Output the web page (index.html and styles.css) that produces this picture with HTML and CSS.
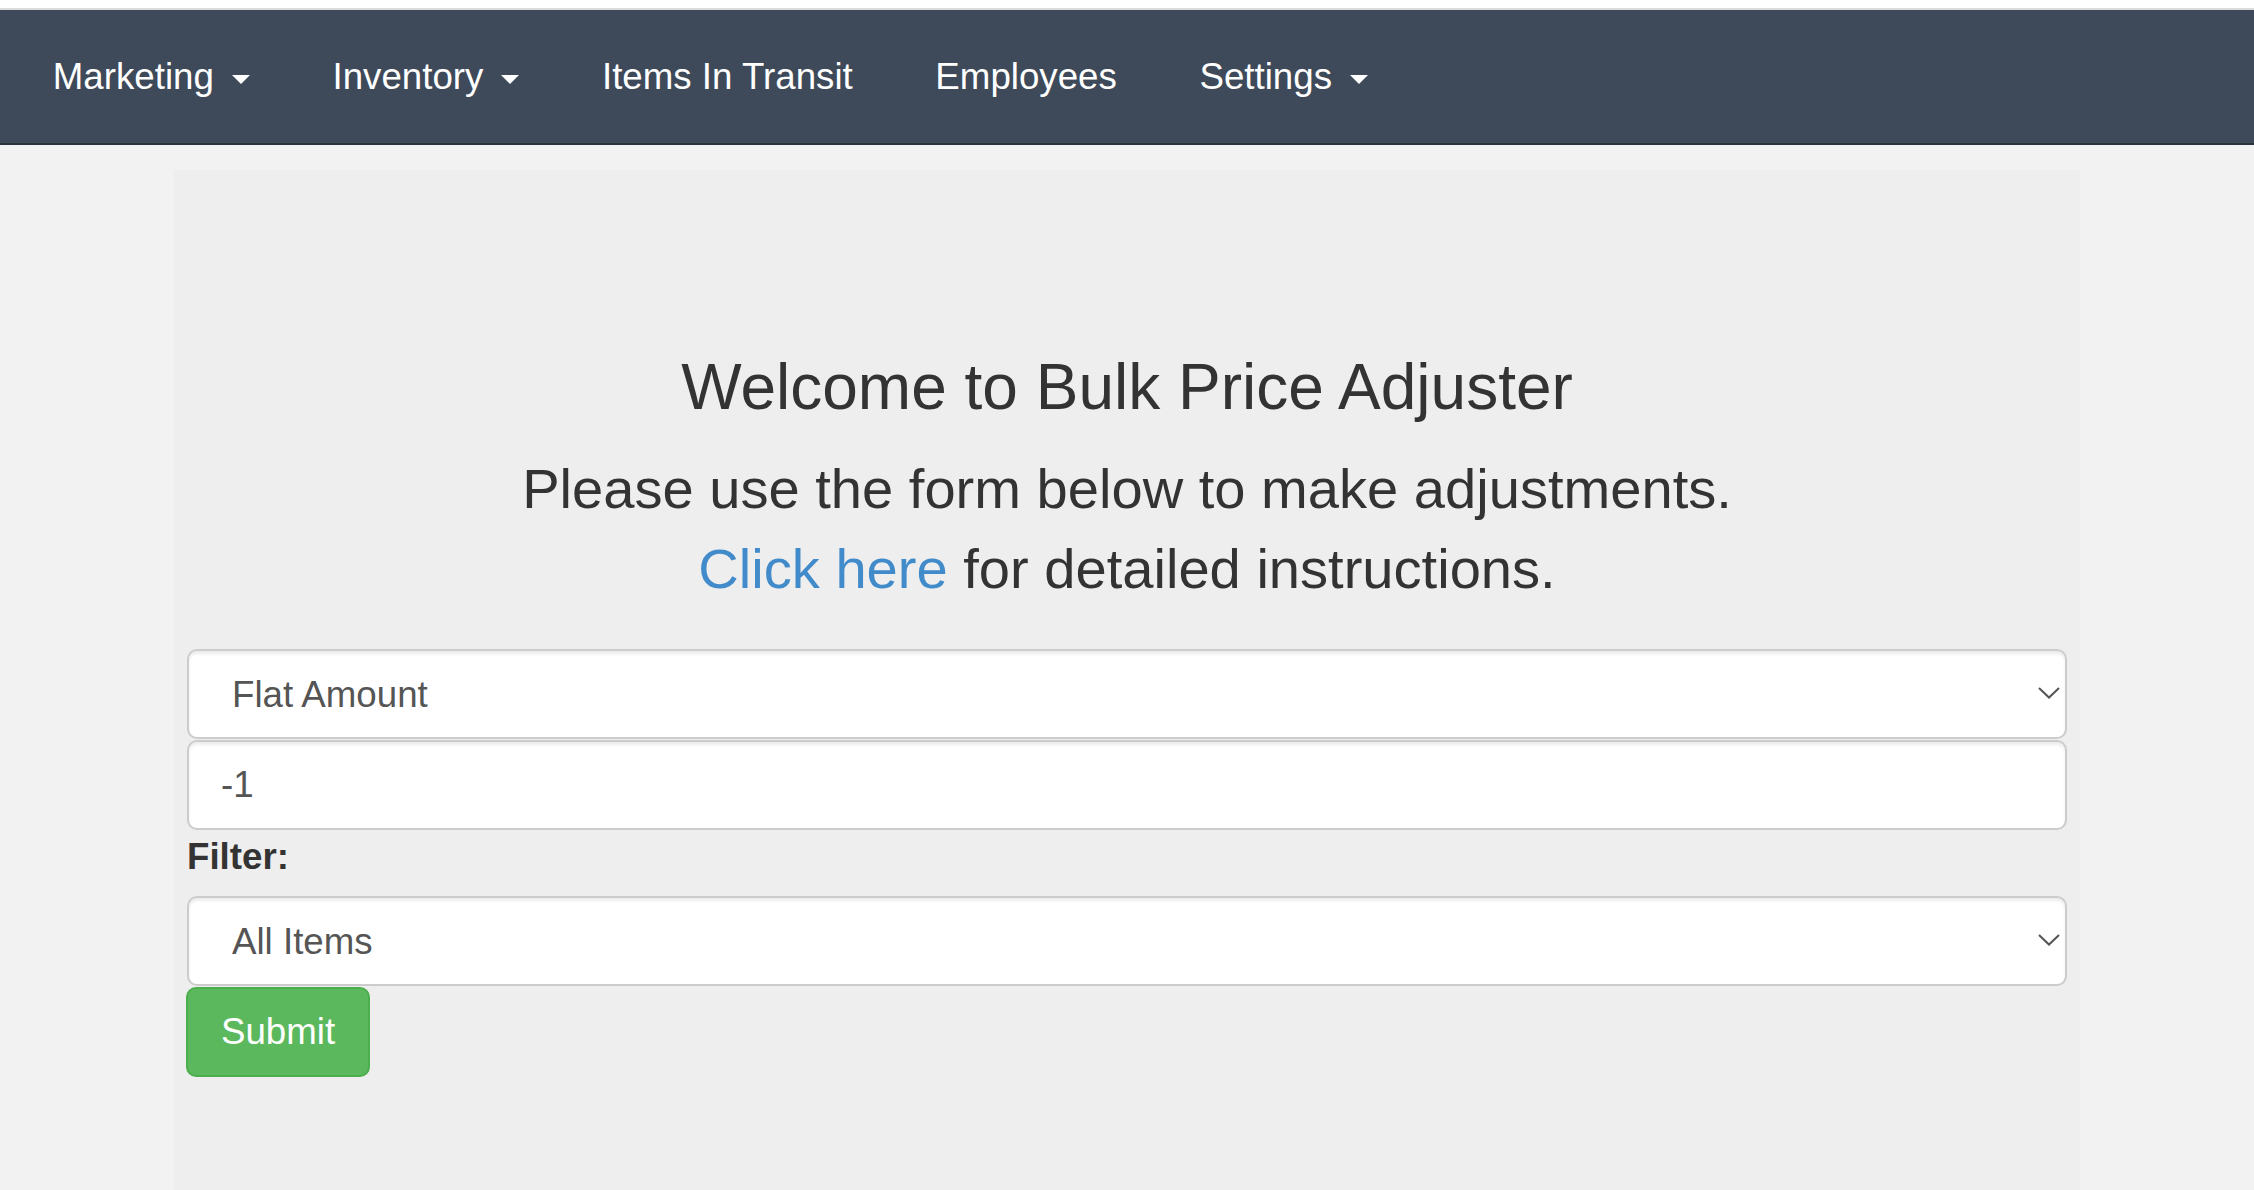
FILE: index.html
```html
<!DOCTYPE html>
<html lang="en">
<head>
<meta charset="utf-8">
<title>Bulk Price Adjuster</title>
<link rel="stylesheet" href="styles.css">
</head>
<body>
<div class="topstrip"></div>
<nav class="navbar">
  <ul class="nav">
    <li><a href="#">Marketing<span class="caret"></span></a></li>
    <li><a href="#">Inventory<span class="caret"></span></a></li>
    <li><a href="#">Items In Transit</a></li>
    <li><a href="#">Employees</a></li>
    <li><a href="#">Settings<span class="caret"></span></a></li>
  </ul>
</nav>
<main class="panel">
  <h1 class="title">Welcome to Bulk Price Adjuster</h1>
  <p class="lead">Please use the form below to make adjustments.<br><a href="#">Click here</a> for detailed instructions.</p>
  <form class="form">
    <div class="select-wrap">
      <select class="control select">
        <option>Flat Amount</option>
        <option>Percentage</option>
      </select>
      <svg class="chevron" width="22" height="12" viewBox="0 0 22 12"><path d="M1 1 L11 10.5 L21 1" fill="none" stroke="#555" stroke-width="2"/></svg>
    </div>
    <input class="control input" type="text" value="-1">
    <label class="label">Filter:</label>
    <div class="select-wrap">
      <select class="control select">
        <option>All Items</option>
      </select>
      <svg class="chevron" width="22" height="12" viewBox="0 0 22 12"><path d="M1 1 L11 10.5 L21 1" fill="none" stroke="#555" stroke-width="2"/></svg>
    </div>
    <div class="actions"><button class="btn" type="button">Submit</button></div>
  </form>
</main>
</body>
</html>
```
FILE: styles.css
```css
html, body {
  margin: 0;
  padding: 0;
}
body {
  background: #f2f2f2;
  font-family: "Liberation Sans", Arial, sans-serif;
  color: #333;
  overflow: hidden;
}
.topstrip {
  height: 8px;
  background: #ffffff;
  border-bottom: 2px solid #dcdcdc;
}
.navbar {
  height: 133px;
  background: #3e4a59;
  border-bottom: 2px solid #2c323a;
}
.nav {
  list-style: none;
  margin: 0;
  padding: 0 0 0 11.5px;
  display: flex;
}
.nav a {
  display: block;
  padding: 0 41.3px;
  color: #ffffff;
  text-decoration: none;
  font-size: 36.7px;
  line-height: 133px;
}
.caret {
  display: inline-block;
  width: 0;
  height: 0;
  margin-left: 18px;
  border-top: 9.5px solid #ffffff;
  border-left: 9.5px solid transparent;
  border-right: 9.5px solid transparent;
  vertical-align: 5px;
}
.panel {
  width: 1906px;
  box-sizing: border-box;
  margin: 25px auto 0;
  min-height: calc(100vh - 170px);
  background: #eeeeee;
  padding: 181.6px 13px 0 13px;
}
.title {
  margin: 0;
  text-align: center;
  font-size: 64px;
  line-height: 70.4px;
  font-weight: 500;
  color: #333;
}
.lead {
  margin: 27px 0 0;
  text-align: center;
  font-size: 56.1px;
  line-height: 79.5px;
  color: #333;
}
.lead a {
  color: #428bca;
  text-decoration: none;
}
.form {
  margin-top: 41px;
  display: flex;
  flex-direction: column;
}
.select-wrap {
  position: relative;
}
.control {
  display: block;
  width: 100%;
  height: 90px;
  box-sizing: border-box;
  border: 2px solid #cccccc;
  border-radius: 10px;
  background: #ffffff;
  box-shadow: inset 0 3px 3px rgba(0, 0, 0, 0.075);
  font-family: "Liberation Sans", Arial, sans-serif;
  font-size: 36.7px;
  color: #555;
  margin: 0 0 1px;
  outline: none;
}
.select {
  appearance: none;
  -webkit-appearance: none;
  padding: 0 60px 0 43px;
}
.input {
  padding: 0 32px;
}
.chevron {
  position: absolute;
  right: 7px;
  top: 38px;
}
.label {
  display: block;
  font-weight: 700;
  font-size: 36.7px;
  line-height: 52.4px;
  margin: 0 0 13px;
  color: #333;
}
.actions {
  display: flex;
}
.btn {
  height: 90px;
  width: 184px;
  box-sizing: border-box;
  margin-left: -1px;
  background: #5cb85c;
  border: 2px solid #4cae4c;
  border-radius: 10px;
  color: #ffffff;
  font-family: "Liberation Sans", Arial, sans-serif;
  font-size: 36.7px;
  padding: 0;
}
```
